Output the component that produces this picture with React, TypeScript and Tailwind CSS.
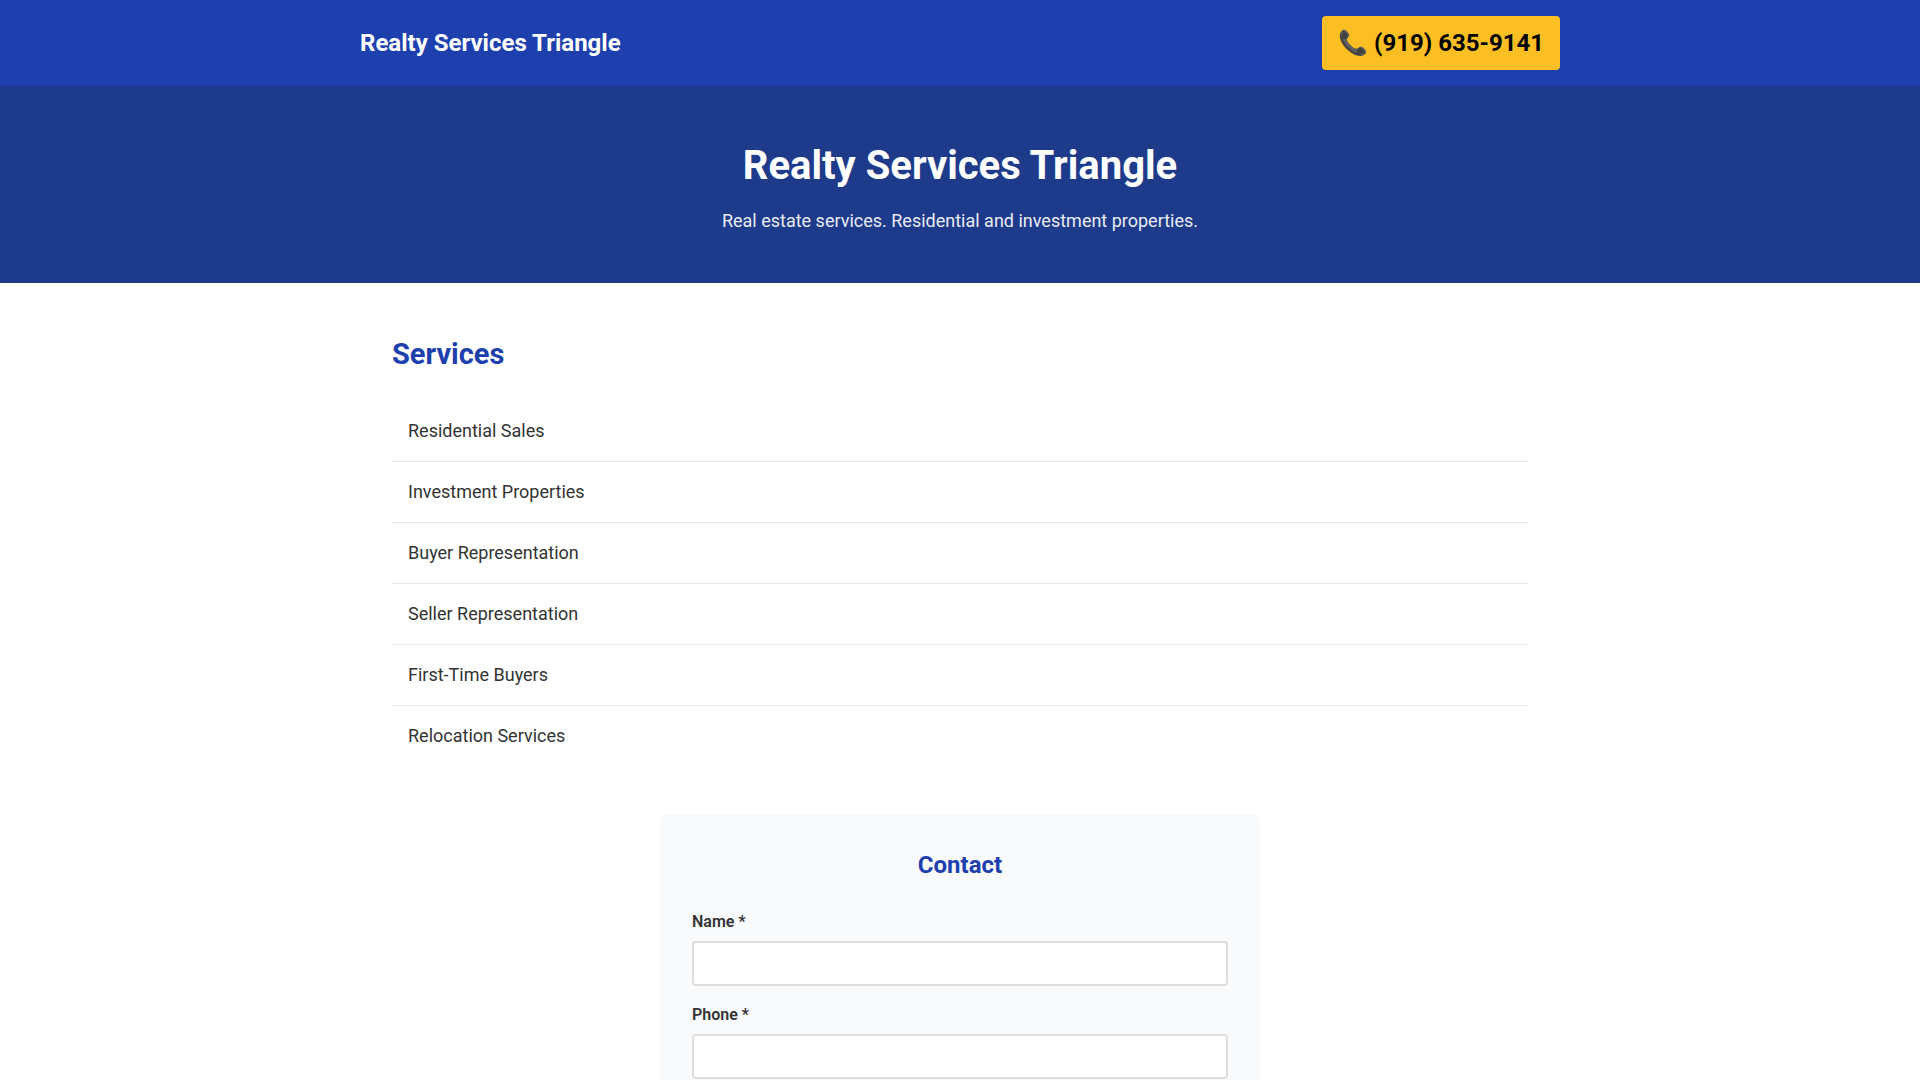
import React from "react";

const PHONE = "(919) 635-9141";

const services = [
  "Residential Sales",
  "Investment Properties",
  "Buyer Representation",
  "Seller Representation",
  "First-Time Buyers",
  "Relocation Services",
];

const fields = [
  { id: "name", label: "Name *", type: "text" },
  { id: "phone", label: "Phone *", type: "tel" },
];

const Header: React.FC = () => (
  <header className="bg-[#1e40af] py-4">
    <div className="mx-auto flex max-w-[1200px] items-center justify-between text-2xl leading-[38px] font-bold">
      <p className="text-white">Realty Services Triangle</p>
      <a href="tel:9196359141" className="rounded-sm bg-[#fbbf24] px-4 py-2 leading-[38px] text-black">
        📞 {PHONE}
      </a>
    </div>
  </header>
);

const Hero: React.FC = () => (
  <section className="bg-[#1e3a8a] px-8 py-12 text-center text-white">
    <h1 className="mb-2 text-[40px] leading-[64px] font-bold">Realty Services Triangle</h1>
    <p className="text-[18px] leading-[29px] opacity-90">
      Real estate services. Residential and investment properties.
    </p>
  </section>
);

const Services: React.FC = () => (
  <section>
    <h2 className="mb-6 text-[29px] leading-[46px] font-bold text-[#1e40af]">Services</h2>
    <ul>
      {services.map((service) => (
        <li
          key={service}
          className="border-b border-[#e5e7eb] p-4 text-[18px] leading-[28px] last:border-b-0"
        >
          {service}
        </li>
      ))}
    </ul>
  </section>
);

const ContactForm: React.FC = () => (
  <section className="mx-auto mt-12 max-w-[600px] rounded-lg bg-[#f8fafc] p-8">
    <h2 className="mb-6 text-center text-2xl leading-[39px] font-bold text-[#1e40af]">Contact</h2>
    <form className="flex flex-col gap-4">
      {fields.map(({ id, label, type }) => (
        <div key={id}>
          <label htmlFor={id} className="mb-1.5 block leading-[26px] font-semibold">
            {label}
          </label>
          <input
            id={id}
            name={id}
            type={type}
            required
            className="block h-[45px] w-full rounded-sm border-2 border-[#dddddd] bg-white px-3"
          />
        </div>
      ))}
    </form>
  </section>
);

const App: React.FC = () => {
  return (
    <div className="bg-white font-['Roboto',sans-serif] text-[#333333]">
      <Header />
      <Hero />
      <main className="mx-auto max-w-[1200px] px-8 py-12">
        <Services />
        <ContactForm />
      </main>
    </div>
  );
};

export default App;
